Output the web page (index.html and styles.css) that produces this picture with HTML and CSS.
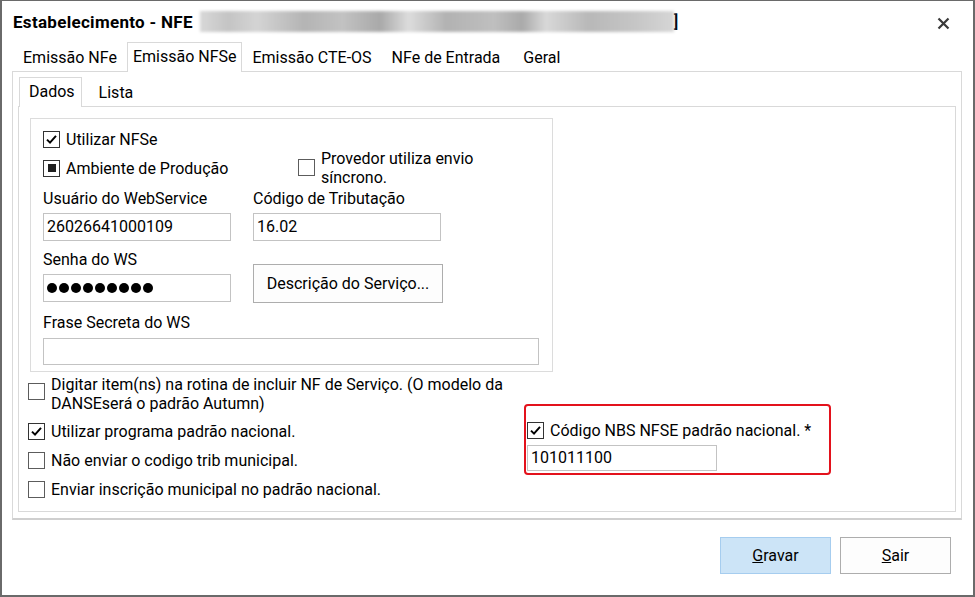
FILE: index.html
```html
<!DOCTYPE html>
<html lang="pt-BR">
<head>
    <meta charset="UTF-8">
    <meta name="viewport" content="width=device-width, initial-scale=1.0">
    <title>Estabelecimento - NFE</title>
    <link rel="stylesheet" href="styles.css">
</head>
<body>
    <div class="window">
        <div class="titlebar">
            <span class="title">Estabelecimento - NFE</span>
            <span class="redacted"></span>
            <span class="bracket">]</span>
            <span class="close">
                <svg width="13" height="13" viewBox="0 0 13 13"><path d="M1.5 1.5L11.5 11.5M11.5 1.5L1.5 11.5" stroke="#3a3a3a" stroke-width="2.2"/></svg>
            </span>
        </div>

        <div class="tabs">
            <div class="tab">Emissão NFe</div>
            <div class="tab active">Emissão NFSe</div>
            <div class="tab">Emissão CTE-OS</div>
            <div class="tab">NFe de Entrada</div>
            <div class="tab">Geral</div>
        </div>

        <div class="panel">
            <div class="subtabs">
                <div class="subtab active">Dados</div>
                <div class="subtab">Lista</div>
            </div>

            <div class="subpanel">
                <!-- bloco principal -->
                <div class="group">
                    <div class="check">
                        <span class="box checked"><svg width="15" height="15" viewBox="0 0 15 15"><path d="M3 7.6L6 10.6L12 3.8" fill="none" stroke="#000" stroke-width="2"/></svg></span>
                        <span>Utilizar NFSe</span>
                    </div>

                    <div class="row row-ambiente">
                        <div class="check col">
                            <span class="box mixed"><span class="dot-fill"></span></span>
                            <span>Ambiente de Produção</span>
                        </div>
                        <div class="check provedor">
                            <span class="box"></span>
                            <span class="two-line">Provedor utiliza envio<br>síncrono.</span>
                        </div>
                    </div>

                    <div class="row row-fields">
                        <div class="field col">
                            <div class="field-label">Usuário do WebService</div>
                            <div class="input">26026641000109</div>
                        </div>
                        <div class="field col">
                            <div class="field-label">Código de Tributação</div>
                            <div class="input">16.02</div>
                        </div>
                    </div>

                    <div class="row row-senha">
                        <div class="field col">
                            <div class="field-label">Senha do WS</div>
                            <div class="input password">
                                <span class="dot"></span><span class="dot"></span><span class="dot"></span>
                                <span class="dot"></span><span class="dot"></span><span class="dot"></span>
                                <span class="dot"></span><span class="dot"></span><span class="dot"></span>
                            </div>
                        </div>
                        <div class="col">
                            <button class="btn btn-desc">Descrição do Serviço...</button>
                        </div>
                    </div>

                    <div class="field field-frase">
                        <div class="field-label">Frase Secreta do WS</div>
                        <div class="input input-wide"></div>
                    </div>
                </div>

                <div class="lower">
                    <div class="options">
                        <div class="check check-top">
                            <span class="box"></span>
                            <span class="two-line">Digitar item(ns) na rotina de incluir NF de Serviço. (O modelo da<br>DANSEserá o padrão Autumn)</span>
                        </div>
                        <div class="check option">
                            <span class="box checked"><svg width="15" height="15" viewBox="0 0 15 15"><path d="M3 7.6L6 10.6L12 3.8" fill="none" stroke="#000" stroke-width="2"/></svg></span>
                            <span>Utilizar programa padrão nacional.</span>
                        </div>
                        <div class="check option">
                            <span class="box"></span>
                            <span>Não enviar o codigo trib municipal.</span>
                        </div>
                        <div class="check option">
                            <span class="box"></span>
                            <span>Enviar inscrição municipal no padrão nacional.</span>
                        </div>
                    </div>

                    <div class="highlight">
                        <div class="check">
                            <span class="box checked"><svg width="15" height="15" viewBox="0 0 15 15"><path d="M3 7.6L6 10.6L12 3.8" fill="none" stroke="#000" stroke-width="2"/></svg></span>
                            <span>Código NBS NFSE padrão nacional. *</span>
                        </div>
                        <div class="input input-nbs">101011100</div>
                    </div>
                </div>
            </div>
        </div>

        <div class="actions">
            <button class="btn btn-primary"><u>G</u>ravar</button>
            <button class="btn btn-action"><u>S</u>air</button>
        </div>
    </div>
</body>
</html>
```

FILE: styles.css
```css
* {
    box-sizing: border-box;
}

body {
    margin: 0;
    padding: 0;
    background-color: #fff;
    color: #000;
    font-family: 'Roboto', 'Liberation Sans', sans-serif;
    font-size: 16px;
}

.window {
    width: 975px;
    height: 597px;
    border: 2px solid #6a6a6a;
    border-top-width: 1px;
    background-color: #fff;
    display: flex;
    flex-direction: column;
}

/* barra de titulo */
.titlebar {
    height: 41px;
    display: flex;
    align-items: center;
    padding-left: 11px;
}

.title {
    font-weight: bold;
    font-size: 17px;
    letter-spacing: 0.3px;
}

.redacted {
    width: 474px;
    height: 21px;
    margin-left: 7px;
    background: linear-gradient(90deg, #d8d8d8 0%, #c4c4c4 6%, #d4d4d4 12%, #b4b4b4 22%, #c2c2c2 30%, #a9a9a9 38%, #dcdcdc 44%, #b2b2b2 52%, #bfbfbf 62%, #aaaaaa 68%, #d8d8d8 73%, #b8b8b8 82%, #c6c6c6 92%, #d6d6d6 100%);
    filter: blur(1.5px);
}

.bracket {
    font-weight: bold;
    font-size: 16px;
    margin-left: 0;
}

.close {
    margin-left: auto;
    margin-right: 23px;
    display: flex;
    margin-top: 3px;
}

/* abas */
.tabs {
    display: flex;
    align-items: flex-end;
    height: 30px;
    padding-left: 10px;
    position: relative;
    z-index: 1;
}

.tab {
    height: 28px;
    line-height: 28px;
    padding: 0 10px 0 11px;
    white-space: nowrap;
}

.tab.active {
    height: 30px;
    line-height: 28px;
    padding: 0 5px;
    border: 1px solid #d9d9d9;
    border-bottom: none;
    background-color: #fff;
}

.tab:nth-child(3),
.tab:nth-child(4) {
    padding: 0 10px;
}

.tab:nth-child(5) {
    padding: 0 10px 0 13px;
}

.panel {
    margin: -1px 11px 0 10px;
    border: 1px solid #d9d9d9;
    border-bottom: 2px solid #cfcfcf;
    padding: 5px 5px 6px 5px;
}

.subtabs {
    display: flex;
    align-items: flex-end;
    height: 30px;
    position: relative;
    z-index: 1;
}

.subtab {
    height: 28px;
    line-height: 28px;
    padding: 0 10px 0 17px;
}

.subtab.active {
    height: 30px;
    margin-left: 1px;
    padding: 0 6px 0 9px;
    border: 1px solid #d9d9d9;
    border-bottom: none;
    background-color: #fff;
}

.subpanel {
    margin-top: -1px;
    border: 1px solid #d9d9d9;
    padding: 11px 10px 12px 9px;
}

/* grupo com dados do webservice */
.group {
    width: 523px;
    margin-left: 2px;
    border: 1px solid #dcdcdc;
    padding: 11px 12px 6px 12px;
}

.check {
    display: flex;
    align-items: center;
    gap: 6px;
    height: 18px;
    white-space: nowrap;
}

.box {
    width: 17px;
    height: 17px;
    flex: none;
    border: 1px solid #5c5c5c;
    background-color: #fff;
    display: flex;
    align-items: center;
    justify-content: center;
}

.box.checked {
    border-color: #333;
}

.box.mixed {
    border-color: #333;
}

.dot-fill {
    width: 8px;
    height: 8px;
    background-color: #1f1f1f;
}

.row {
    display: flex;
    gap: 22px;
}

.col {
    width: 188px;
}

.row-ambiente {
    margin-top: 11px;
    height: 18px;
    align-items: flex-start;
}

.provedor {
    align-items: flex-start;
    margin-left: 45px;
}

.provedor .two-line {
    margin-top: -10px;
    line-height: 19px;
}

.row-fields {
    margin-top: 12px;
}

.row-senha {
    margin-top: 9px;
}

.field-label {
    line-height: 20px;
    white-space: nowrap;
}

.input {
    margin-top: 4px;
    height: 28px;
    border: 1px solid #c3c3c3;
    background-color: #fff;
    line-height: 26px;
    padding-left: 3px;
}

.password {
    display: flex;
    align-items: center;
    gap: 2px;
}

.dot {
    width: 10px;
    height: 10px;
    border-radius: 50%;
    background-color: #000;
}

.field-frase {
    margin-top: 10px;
}

.input-wide {
    width: 496px;
    height: 27px;
    margin-top: 5px;
}

.btn {
    font-family: inherit;
    font-size: 16px;
    color: #000;
    background-color: #fdfdfd;
    border: 1px solid #adadad;
    padding: 0;
    cursor: pointer;
}

.btn-desc {
    margin-top: 14px;
    width: 190px;
    height: 39px;
}

/* opcoes de baixo */
.lower {
    display: flex;
    margin-top: 3px;
}

.options {
    width: 496px;
}

.check-top {
    height: auto;
    align-items: flex-start;
}

.check-top .box {
    margin-top: 8px;
}

.check-top .two-line {
    line-height: 19px;
}

.option {
    height: 20px;
    margin-top: 9px;
}

.check-top + .option {
    margin-top: 8px;
}

.highlight {
    width: 307px;
    height: 71px;
    margin-top: 29px;
    border: 2px solid #e3121c;
    border-radius: 4px;
    padding: 14px 0 0 1px;
}

.highlight .check {
    height: 20px;
}

.input-nbs {
    width: 190px;
    height: 26px;
    margin-top: 5px;
    line-height: 24px;
}

/* botoes */
.actions {
    display: flex;
    justify-content: flex-end;
    gap: 9px;
    padding: 17px 22px 0 0;
}

.actions .btn {
    width: 111px;
    height: 37px;
}

.btn-primary {
    background-color: #cce4f7;
    border-color: #a6cdef;
}

.btn-action {
    background-color: #fdfdfd;
}
```
